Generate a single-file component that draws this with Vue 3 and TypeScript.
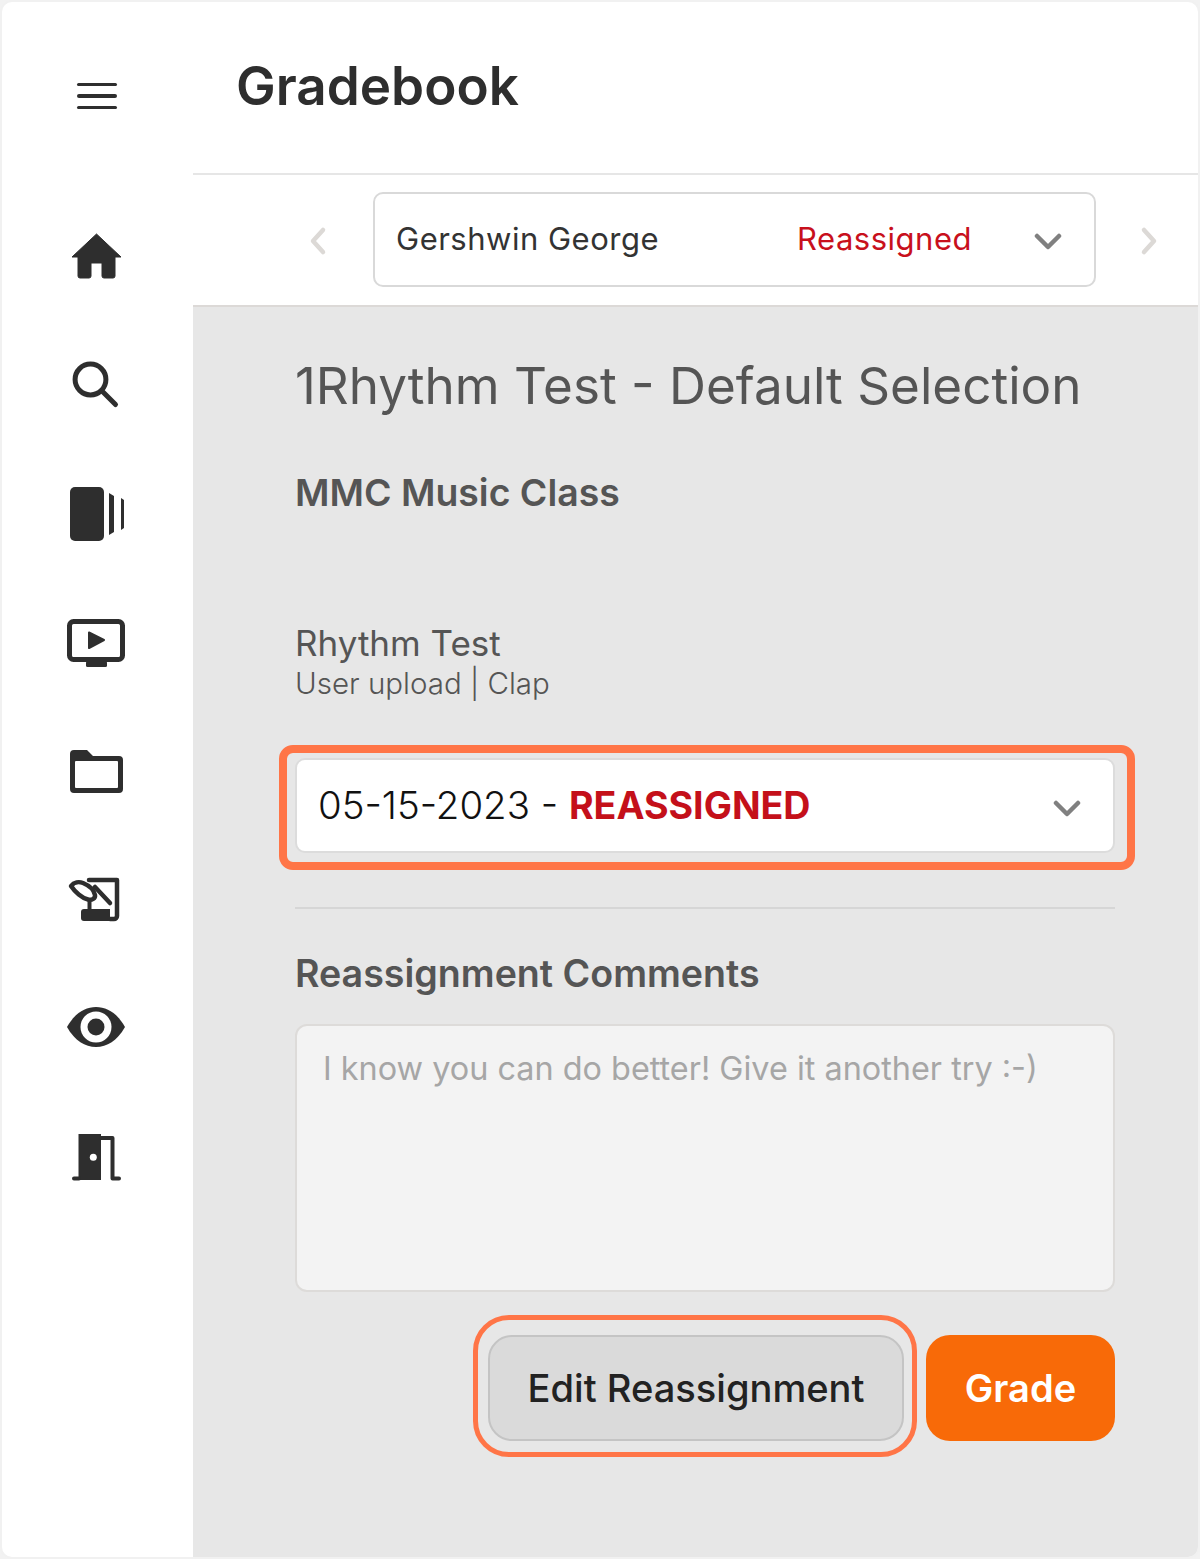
<script setup lang="ts">
const status = 'REASSIGNED'
</script>

<template>
  <div class="frame">
    <aside class="sidebar">
      <button class="menu" aria-label="Menu"><span></span><span></span><span></span></button>
      <nav class="nav">
        <a class="nav-item">
          <svg viewBox="0 0 64 64"><path d="M31.5 9 56 32H50V51a2 2 0 0 1-2 2H39a2 2 0 0 1-2-2V38H26V51a2 2 0 0 1-2 2H15a2 2 0 0 1-2-2V32H7Z" fill="#2e2e2e" stroke="#2e2e2e" stroke-width="1" stroke-linejoin="round"/></svg>
        </a>
        <a class="nav-item">
          <svg viewBox="0 0 64 64"><circle cx="25.5" cy="26.5" r="15.4" fill="none" stroke="#2e2e2e" stroke-width="5"/><path d="M37 38 50.500 51.500" stroke="#2e2e2e" stroke-width="5" stroke-linecap="round"/></svg>
        </a>
        <a class="nav-item">
          <svg viewBox="0 -1 64 64"><rect x="5" y="5" width="34" height="54" rx="5" fill="#2e2e2e"/><path d="M44 11 49 14V50L44 53Z M56 16 59 18V46L56 48Z" fill="#2e2e2e"/></svg>
        </a>
        <a class="nav-item">
          <svg viewBox="0 0 64 64"><rect x="4.500" y="12.500" width="53" height="38" rx="4" fill="none" stroke="#2e2e2e" stroke-width="5"/><rect x="21" y="52" width="21" height="6" rx="1.5" fill="#2e2e2e"/><path d="M24 23.500 39 31 24 39Z" fill="#2e2e2e" stroke="#2e2e2e" stroke-width="2" stroke-linejoin="round"/></svg>
        </a>
        <a class="nav-item">
          <svg viewBox="0 -3 64 64"><path fill-rule="evenodd" d="M9 10H22L28 16H54a4 4 0 0 1 4 4V49a4 4 0 0 1-4 4H9a4 4 0 0 1-4-4V14a4 4 0 0 1 4-4ZM11 21a1 1 0 0 0-1 1V47a1 1 0 0 0 1 1H52a1 1 0 0 0 1-1V22a1 1 0 0 0-1-1Z" fill="#2e2e2e"/></svg>
        </a>
        <a class="nav-item">
          <svg viewBox="0 -2 64 64"><path d="M24 13H52V49a3 3 0 0 1-3 3H45M30 20 45 36" fill="none" stroke="#2e2e2e" stroke-width="4.500" stroke-linecap="round" stroke-linejoin="round"/><path d="M6 19C9 15 14 14.500 18 16C24 18.500 29 23 30 28C30.500 31.500 27 33.500 23 32.500C17 31 10 25 6 19Z" fill="#fff" stroke="#2e2e2e" stroke-width="4.500" stroke-linejoin="round"/><path d="M24.500 33V44" stroke="#2e2e2e" stroke-width="4"/><path d="M16 45a3 3 0 0 1 3-3H45V54H19a3 3 0 0 1-3-3Z" fill="#2e2e2e"/></svg>
        </a>
        <a class="nav-item">
          <svg viewBox="0 -2 64 64"><path d="M2 32C10 18 20 12 31 12S52 18 60 32C52 46 42 52 31 52S10 46 2 32Z" fill="#2e2e2e"/><circle cx="31" cy="32" r="15.500" fill="#fff"/><circle cx="31" cy="32" r="8.500" fill="#2e2e2e"/></svg>
        </a>
        <a class="nav-item">
          <svg viewBox="0 -4 64 64"><path d="M13.500 9H36V55H13.500Z" fill="#2e2e2e"/><circle cx="28.300" cy="32.300" r="3.500" fill="#fff"/><path d="M36 13H47.500V53.500H54M9 53.500H14" fill="none" stroke="#2e2e2e" stroke-width="4" stroke-linecap="round" stroke-linejoin="round"/></svg>
        </a>
      </nav>
    </aside>

    <main class="main">
      <header class="header">
        <h1>Gradebook</h1>
      </header>

      <div class="student-bar">
        <span class="pager pager-prev">
          <svg viewBox="0 0 20 30"><path d="M15 4 5 15 15 26" /></svg>
        </span>
        <div class="student-select">
          <span class="student-name">Gershwin George</span>
          <span class="student-status">Reassigned</span>
          <svg class="chevron" viewBox="0 0 28 18"><path d="M3 3 14 14 25 3" /></svg>
        </div>
        <span class="pager pager-next">
          <svg viewBox="0 0 20 30"><path d="M5 4 15 15 5 26" /></svg>
        </span>
      </div>

      <section class="content">
        <h2 class="title">1Rhythm Test - Default Selection</h2>
        <p class="class-name">MMC Music Class</p>

        <p class="item-name">Rhythm Test</p>
        <p class="item-meta">User upload | Clap</p>

        <div class="date-select highlighted">
          <span class="date-text">05-15-2023 - <strong>{{ status }}</strong></span>
          <svg class="chevron" viewBox="0 0 28 18"><path d="M3 3 14 14 25 3" /></svg>
        </div>

        <hr class="divider" />

        <h3 class="comments-title">Reassignment Comments</h3>
        <div class="comments">I know you can do better! Give it another try :-)</div>

        <div class="actions">
          <button class="btn btn-edit highlighted-btn">Edit Reassignment</button>
          <button class="btn btn-grade">Grade</button>
        </div>
      </section>
    </main>
  </div>
</template>

<style>
html, body { margin: 0; background: #f2f2f2; }
</style>

<style scoped>
.frame {
  box-sizing: border-box;
  width: 1200px;
  height: 1559px;
  display: flex;
  background: #fff;
  border: 2px solid #f1f1f1;
  border-radius: 12px;
  overflow: hidden;
  font-family: Inter, "Liberation Sans", sans-serif;
}
.sidebar {
  width: 191px;
  flex: none;
  display: flex;
  flex-direction: column;
}
.menu {
  height: 191px;
  margin: 0;
  padding: 0 2px 3px 0;
  border: 0;
  background: none;
  display: flex;
  flex-direction: column;
  align-items: center;
  justify-content: center;
  gap: 8px;
}
.menu span {
  display: block;
  width: 40px;
  height: 3.500px;
  border-radius: 2px;
  background: #2e2e2e;
}
.nav { display: flex; flex-direction: column; }
.nav-item {
  height: 128px;
  display: flex;
  align-items: center;
  justify-content: center;
  padding-right: 2px;
}
.nav-item svg { width: 64px; height: 64px; }
.main {
  flex: 1;
  min-width: 0;
  display: flex;
  flex-direction: column;
}
.header {
  height: 171px;
  flex: none;
  box-sizing: content-box;
  border-bottom: 2px solid #e6e6e6;
  padding-left: 43px;
}
.header h1 {
  margin: 0;
  padding-top: 54px;
  font-size: 53px;
  line-height: 60px;
  font-weight: 600;
  color: #2e2e2e;
}
.student-bar {
  height: 132px;
  flex: none;
  box-sizing: border-box;
  padding-bottom: 2px;
  border-bottom: 2px solid #dcd9d7;
  display: grid;
  grid-template-columns: 180px 723px 1fr;
  align-items: center;
}
.pager { display: flex; margin-top: 4px; }
.pager svg { width: 20px; height: 30px; }
.pager path { fill: none; stroke: #dcd9d6; stroke-width: 4.500; stroke-linecap: round; stroke-linejoin: round; }
.pager-prev { justify-content: flex-start; padding-left: 115px; }
.pager-next { justify-content: flex-start; padding-left: 43px; }
.student-select {
  box-sizing: border-box;
  height: 95px;
  display: flex;
  align-items: center;
  padding: 0 32px 2px 21px;
  border: 2px solid #d9d9d9;
  border-radius: 10px;
}
.student-name { flex: 1; font-size: 31px; color: #333; letter-spacing: 0.5px; }
.student-status { font-size: 31px; color: #c8101c; letter-spacing: 0.5px; margin-right: 62px; }
.chevron { width: 28px; height: 18px; flex: none; margin-top: 8px; }
.chevron path { fill: none; stroke: #808080; stroke-width: 4.500; stroke-linecap: round; stroke-linejoin: round; }
.content {
  flex: 1;
  background: #e7e7e7;
  padding: 0 83px 0 102px;
  min-height: 0;
  display: flex;
  flex-direction: column;
}
.title {
  margin: 48px 0 0;
  font-size: 51.200px;
  line-height: 60px;
  font-weight: 400;
  color: #555;
  white-space: nowrap;
}
.class-name {
  margin: 56px 0 0;
  font-size: 37.400px;
  line-height: 44px;
  font-weight: 600;
  color: #555;
}
.item-name {
  margin: 108px 0 0;
  font-size: 35px;
  line-height: 40px;
  color: #555;
}
.item-meta {
  margin: 0;
  font-size: 29.500px;
  line-height: 40px;
  font-weight: 300;
  color: #555;
}
.date-select {
  position: relative;
  box-sizing: border-box;
  height: 95px;
  margin-top: 55px;
  display: flex;
  align-items: center;
  justify-content: space-between;
  padding: 0 32px 2px 21px;
  background: #fff;
  border: 2px solid #dcdcdc;
  border-radius: 10px;
}
.date-select::after {
  content: "";
  position: absolute;
  inset: -15px -22px -19px -18px;
  border: 8px solid #ff7547;
  border-radius: 14px;
  pointer-events: none;
}
.date-text { font-size: 38.400px; font-weight: 300; color: #111; }
.date-text strong { font-size: 37.600px; font-weight: 700; color: #c4101a; }
.divider {
  margin: 54px 0 0;
  height: 2px;
  border: 0;
  background: #d6d6d6;
}
.comments-title {
  margin: 43px 0 0;
  font-size: 37.600px;
  line-height: 44px;
  font-weight: 600;
  color: #555;
}
.comments {
  box-sizing: border-box;
  height: 268px;
  margin-top: 28px;
  padding: 22px 26px;
  background: #f3f3f3;
  border: 2px solid #dddbd9;
  border-radius: 12px;
  font-size: 32.400px;
  line-height: 42px;
  color: #a6a6a6;
}
.actions {
  margin-top: 43px;
  display: flex;
  justify-content: flex-end;
  gap: 22px;
}
.btn {
  box-sizing: border-box;
  height: 106px;
  margin: 0;
  font-family: inherit;
  font-size: 38.100px;
}
.btn-edit {
  position: relative;
  width: 416px;
  background: #dadada;
  border: 2px solid #c4c4c4;
  border-radius: 24px;
  color: #222;
  font-weight: 500;
}
.btn-edit::after {
  content: "";
  position: absolute;
  inset: -22px -15px -18px -17px;
  border: 5px solid #ff7547;
  border-radius: 36px;
  pointer-events: none;
}
.btn-grade {
  width: 189px;
  background: #f86a08;
  border: 0;
  border-radius: 24px;
  color: #fff;
  font-weight: 600;
}
</style>
